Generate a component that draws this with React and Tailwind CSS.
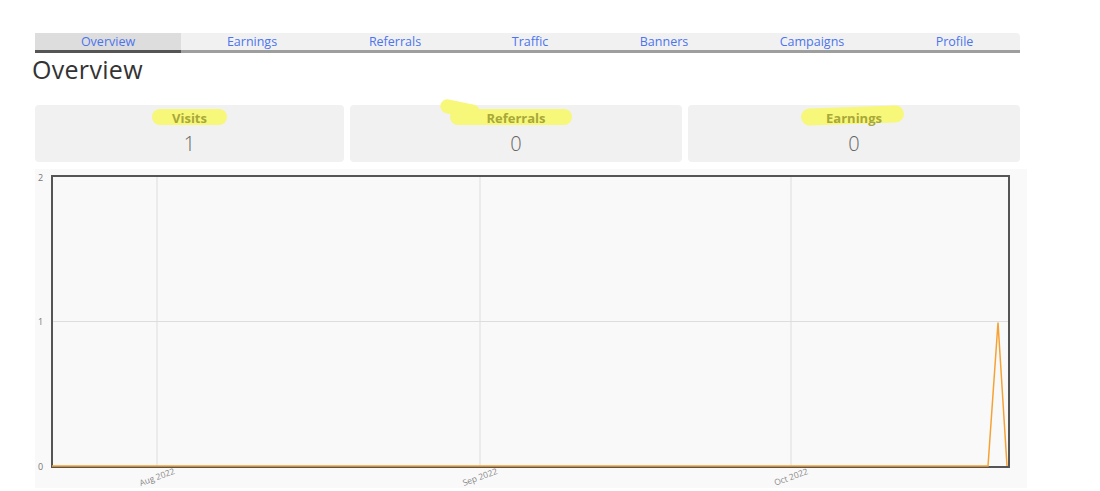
import React from "react";

const tabs = [
  { name: "Overview", w: 146, active: true },
  { name: "Earnings", w: 142 },
  { name: "Referrals", w: 144 },
  { name: "Traffic", w: 126 },
  { name: "Banners", w: 142 },
  { name: "Campaigns", w: 154 },
  { name: "Profile", w: 131 },
];

const Highlight = ({ className }) => (
  <span className={"absolute rounded-full bg-[#f7f77a] " + className} />
);

const StatCard = ({ label, value, className, marks }) => (
  <div className={"h-[57px] rounded bg-[#f1f1f1] flex flex-col items-center pt-[4px] " + className}>
    <div className="relative leading-4">
      {marks}
      <span className="relative text-[13px] font-bold text-[#a8a838]">{label}</span>
    </div>
    <div className="mt-[6px] text-[20px] font-light text-[#666] leading-6">{value}</div>
  </div>
);

const Chart = () => {
  const left = 17, right = 974, top = 7, bottom = 298;
  const mid = (top + bottom) / 2;
  const gx = [122, 445, 756];
  const labels = ["Aug 2022", "Sep 2022", "Oct 2022"];
  return (
    <svg width="992" height="319" className="block">
      {gx.map((x) => (
        <line key={x} x1={x} y1={top} x2={x} y2={bottom} stroke="#dddddd" strokeWidth="1" />
      ))}
      <line x1={left} y1={mid} x2={right} y2={mid} stroke="#dddddd" strokeWidth="1" />
      <rect x={left} y={top} width={right - left} height={bottom - top} fill="none" stroke="#555" strokeWidth="2" />
      <polyline
        points={`${left},${bottom - 1} 953,${bottom - 1} 963,${mid + 1} 972,${bottom - 1}`}
        fill="none"
        stroke="#f5a235"
        strokeWidth="1.5"
      />
      <text x="3" y="12" fontSize="9" fill="#777">2</text>
      <text x="3" y="156" fontSize="9" fill="#777">1</text>
      <text x="3" y="301" fontSize="9" fill="#777">0</text>
      {gx.map((x, i) => (
        <text
          key={x}
          x={x}
          y={311}
          fontSize="8.5"
          fill="#888"
          textAnchor="middle"
          transform={`rotate(-20 ${x} 308)`}
        >
          {labels[i]}
        </text>
      ))}
    </svg>
  );
};

export default function App() {
  return (
    <div className="min-h-[491px] bg-white font-['Open_Sans',sans-serif] pt-[33px] pl-[35px]">
      <div className="w-[985px]">
        <div className="flex rounded-tr bg-[#f1f1f1] border-b-[3px] border-[#9e9e9e] h-[20px]">
          {tabs.map((t) => (
            <div
              key={t.name}
              style={{ width: t.w }}
              className={
                "text-center text-[12.5px] font-medium leading-[17px] text-[#4b74ee] " +
                (t.active ? "bg-[#dddddd] border-b-[3px] border-[#555] -mb-[3px]" : "")
              }
            >
              {t.name}
            </div>
          ))}
        </div>
        <h1 className="-ml-[3px] mt-0 text-[25px] font-medium text-[#333] leading-8 tracking-[0.3px]">
          Overview
        </h1>
        <div className="mt-[20px] flex gap-[6px]">
          <StatCard
            label="Visits"
            value="1"
            className="w-[309px]"
            marks={<Highlight className="-left-[20px] -right-[20px] top-[0px] h-[16px]" />}
          />
          <StatCard
            label="Referrals"
            value="0"
            className="w-[332px]"
            marks={
              <>
                <Highlight className="-left-[46px] top-[-7px] h-[14px] w-[40px] rotate-12" />
                <Highlight className="-left-[36px] -right-[26px] top-[0px] h-[16px]" />
              </>
            }
          />
          <StatCard
            label="Earnings"
            value="0"
            className="w-[332px]"
            marks={<Highlight className="-left-[25px] -right-[22px] top-[-2px] h-[17px] -rotate-2" />}
          />
        </div>
        <div className="mt-[7px] w-[992px] bg-[#f9f9f9]">
          <Chart />
        </div>
      </div>
    </div>
  );
}
